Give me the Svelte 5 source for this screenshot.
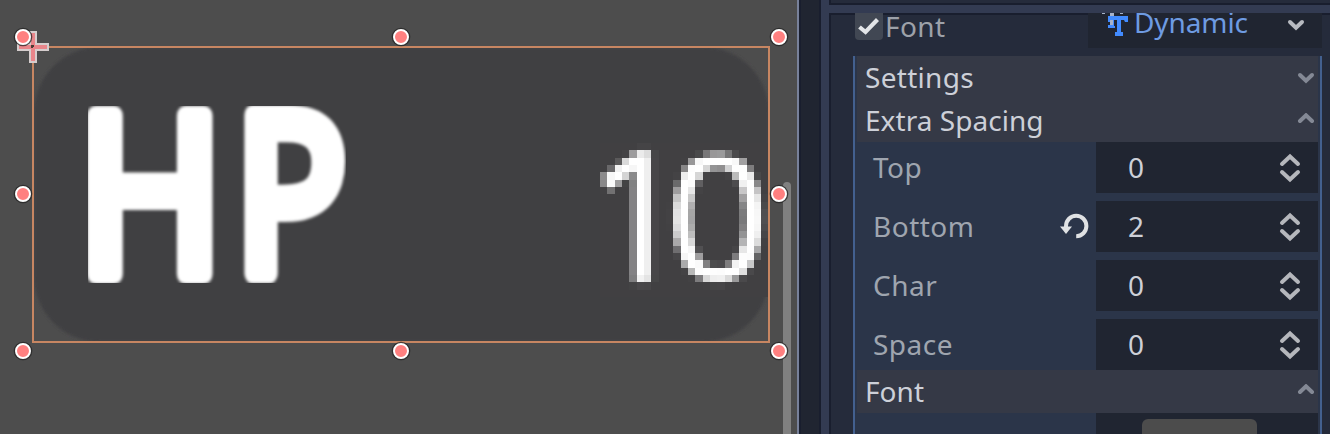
<script>
  const rows = [
    { label: 'Top', value: 0 },
    { label: 'Bottom', value: 2, changed: true },
    { label: 'Char', value: 0 },
    { label: 'Space', value: 0 }
  ];
  const handles = [[23, 37], [401, 37], [779, 37], [23, 194], [779, 194], [23, 351], [401, 351], [779, 351]];
  // sample points inside a 22px tile that holds three cells
  const steps = [3, 10, 18];
  const dots = steps.flatMap((y) => steps.map((x) => ({ x, y })));
</script>

{#snippet chevron(up, cls)}
  <svg class={cls} width="18" height="12" viewBox="0 0 18 12">
    <path d={up ? 'M3 8 9 2.3 15 8' : 'M3 3 9 8.7 15 3'} />
  </svg>
{/snippet}

<main class="editor">
  <section class="viewport">
    <svg class="scene" width="797" height="434" viewBox="0 0 797 434">
      <defs>
        <filter id="soft" x="88" y="106" width="258" height="177" filterUnits="userSpaceOnUse" color-interpolation-filters="sRGB">
          <feGaussianBlur stdDeviation="1.7" />
        </filter>
        <filter id="cells" x="600" y="143" width="168" height="154" filterUnits="userSpaceOnUse" color-interpolation-filters="sRGB">
          <feFlood flood-color="#414042" result="back" />
          <feGaussianBlur in="SourceGraphic" stdDeviation="2" result="blurred" />
          <feMerge result="opaque"><feMergeNode in="back" /><feMergeNode in="blurred" /></feMerge>
          {#each dots as d, i}
            <feFlood x={600 + d.x} y={143 + d.y} width="1" height="1" flood-color="#fff" result={`d${i}`} />
          {/each}
          <feMerge x="600" y="143" width="22" height="22" result="dots">
            {#each dots as d, i}<feMergeNode in={`d${i}`} />{/each}
          </feMerge>
          <feTile in="dots" result="grid" />
          <feComposite in="opaque" in2="grid" operator="in" />
          <feMorphology operator="dilate" radius="3" result="blocks" />
          <feOffset in="blocks" dx="1" result="right" />
          <feMerge result="wide"><feMergeNode in="right" /><feMergeNode in="blocks" /></feMerge>
          <feOffset in="wide" dy="1" result="down" />
          <feMerge><feMergeNode in="down" /><feMergeNode in="wide" /></feMerge>
        </filter>
        <filter id="edge"><feGaussianBlur stdDeviation="1.5" /></filter>
        <clipPath id="box"><rect x="33" y="47" width="737" height="295" /></clipPath>
      </defs>
      <g clip-path="url(#box)">
        <rect x="34" y="47" width="735" height="295" rx="66" fill="#414042" filter="url(#edge)" />
      </g>
      <g filter="url(#soft)" class="hp">
        <text transform="translate(77 274) scale(.895 1.01)">H</text>
        <text transform="translate(235 274) scale(.835 1.01)">P</text>
      </g>
      <g filter="url(#cells)" class="num">
        <text x="585.5" y="280.5">1</text>
        <text transform="translate(666 279) scale(1 .95)">0</text>
      </g>
      <rect x="783" y="182" width="8" height="260" rx="4" fill="#808080" />
      <rect x="33" y="47" width="736" height="295" fill="none" stroke="#c78662" stroke-width="2" />
      <path d="M30 32h6v12h12v6H36v12h-6V50H18v-6h12z" fill="#e9858a" stroke="#d5cdcd" stroke-width="2" />
      <path d="M32 48v-2h2" fill="none" stroke="#493b34" stroke-width="2" />
      {#each handles as [x, y]}
        <circle cx={x} cy={y} r="9.3" fill="#242424" opacity=".75" />
        <circle cx={x} cy={y} r="7" fill="#ff8080" stroke="#fff" stroke-width="2" />
      {/each}
    </svg>
  </section>
  <div class="gutter"></div>
  <div class="split"></div>
  <aside class="dock">
    <div class="above"></div>
    <div class="bar"></div>
    <div class="inspector">
      <div class="property">
        <span class="check">
          <svg width="28" height="28" viewBox="0 0 28 28"><path d="M4.5 14 10.5 19 22.5 6.5" /></svg>
        </span>
        <span class="name">Font</span>
        <div class="resource">
          <svg class="type" width="28" height="24" viewBox="0 0 28 24">
            <path d="M2 0h3v1H2zm8 0h4v3h-4zm10 0h3v1h-3z" fill="#a7b2c9" />
            <path d="M8 3h20v6h-3l-1-2h-3v12h2v4h-8v-4h2V7h-3v6h1v2H8v-3h2V9H8z" fill="#428bff" />
            <path d="M10 7h3v5h-3z" fill="#a7b2c9" />
          </svg>
          <span>Dynamic</span>
          {@render chevron(false, 'arrow bright')}
        </div>
      </div>
      <div class="group">
        <div class="head"><span class="loose">Settings</span>{@render chevron(false, 'arrow')}</div>
        <div class="head"><span>Extra Spacing</span>{@render chevron(true, 'arrow high')}</div>
        <div class="rows">
          {#each rows as row}
            <div class="row">
              <span class="label">{row.label}</span>
              {#if row.changed}
                <svg class="revert" width="30" height="28" viewBox="0 0 30 28">
                  <path d="M7 14.5V13a10.2 10.2 0 1 1 10.2 10.2" fill="none" stroke="#e0e2e4" stroke-width="4" />
                  <path d="M1 13.5h12L7 21z" fill="#e0e2e4" />
                </svg>
              {/if}
              <div class="field">
                <span>{row.value}</span>
                <svg class="spin" width="22" height="30" viewBox="0 0 22 30"><path d="M3 11 11 3.5 19 11M3 19 11 26.5 19 19" /></svg>
              </div>
            </div>
          {/each}
        </div>
        <div class="head"><span>Font</span>{@render chevron(true, 'arrow high')}</div>
        <div class="font-row"><div class="well"><div class="preview"></div></div></div>
      </div>
    </div>
  </aside>
</main>

<style>
  .editor { display: flex; width: 1330px; height: 434px; overflow: hidden; background: #252b3b; font: 28px/38px "Noto Sans", sans-serif; color: #cdd0d8; }
  .viewport { width: 797px; background: #4d4d4d; flex: none; }
  .scene { display: block; }
  .hp { font-size: 220px; fill: #fff; stroke: #fff; stroke-width: 20px; stroke-linejoin: round; }
  .num { font-size: 181px; fill: #fff; stroke: #fff; stroke-width: 1.5px; }
  .gutter { box-sizing: border-box; width: 24px; flex: none; background: #202531; border-left: 2px solid #78819a; border-right: 2px solid #191e2e; box-shadow: inset 2px 0 #191e2e; }
  .split { width: 8px; flex: none; background: #333b52; }
  .dock { width: 501px; display: flex; flex-direction: column; }
  .above { box-sizing: border-box; height: 5px; flex: none; border-left: 2px solid #191e2e; border-bottom: 2px solid #191e2e; }
  .bar { height: 8px; flex: none; background: #333b52; }
  .inspector { box-sizing: border-box; flex: none; height: 421px; overflow: hidden; padding-left: 24px; background: linear-gradient(#191e2e 0 0) 0 0 / 2px 100% no-repeat, linear-gradient(#191e2e 0 0) 0 0 / 100% 2px no-repeat; }
  .property { display: flex; height: 43px; padding-left: 2px; }
  .check { width: 28px; height: 27px; border-radius: 0 0 4px 4px; background: #414753; flex: none; }
  .check svg { display: block; }
  .check path { fill: none; stroke: #e3e5e8; stroke-width: 4.2; }
  .name { color: #9da1a9; margin-left: 2px; width: 203px; margin-top: -6px; letter-spacing: .4px; }
  .resource { display: flex; box-sizing: border-box; width: 234px; height: 35px; padding: 0 17px 0 12px; background: #202531; color: #6e9be2; }
  .type { overflow: visible; margin-right: 6px; flex: none; }
  .resource span { margin-top: -10px; flex: 1; letter-spacing: -.1px; }
  .arrow { fill: none; stroke: #848995; stroke-width: 4; stroke-linecap: round; }
  .high { margin-top: -3px; }
  .bright { stroke: #b7bac0; margin-top: 6px; }
  .group { box-sizing: border-box; width: 469px; height: 380px; padding: 0 2px; border: solid #43608f; border-width: 0 2px; background: #2b3549; }
  .head { display: flex; align-items: center; justify-content: space-between; box-sizing: border-box; height: 43px; padding: 0 3px 0 8px; background: #353946; }
  .head span { margin-top: -1px; letter-spacing: .05px; }
  .head .loose { letter-spacing: .3px; }
  .rows { display: flex; flex-direction: column; gap: 8px; }
  .row { display: flex; align-items: center; height: 51px; }
  .label { flex: 1; padding-left: 16px; margin-top: -2px; letter-spacing: .5px; color: #9fa5af; }
  .revert { margin-right: 7px; }
  .field { display: flex; align-items: center; justify-content: space-between; box-sizing: border-box; width: 222px; height: 51px; padding: 0 17px 0 32px; background: #202531; }
  .field span { margin-top: -2px; }
  .spin { fill: none; stroke: #b5b7bc; stroke-width: 4; stroke-linecap: round; }
  .font-row { display: flex; justify-content: flex-end; }
  .well { box-sizing: border-box; width: 222px; height: 30px; padding: 6px 0 0 46px; background: #202531; }
  .preview { width: 115px; height: 30px; border-radius: 6px; background: #4c4c4c; }
</style>
